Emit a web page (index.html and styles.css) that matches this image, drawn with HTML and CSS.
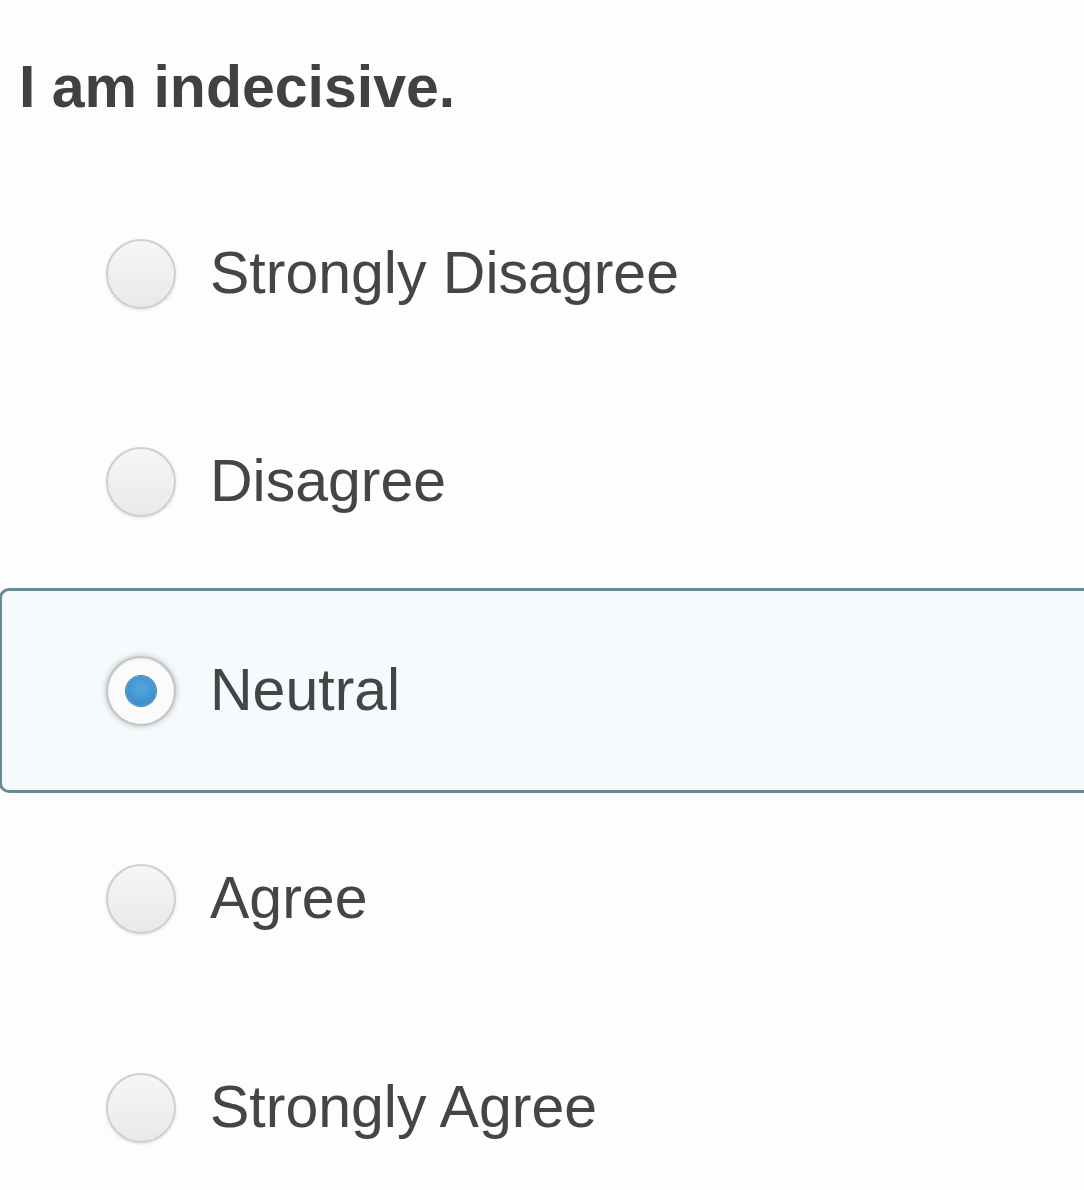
FILE: index.html
```html
<!DOCTYPE html>
<html lang="en">
<head>
<meta charset="utf-8">
<title>I am indecisive.</title>
<link rel="stylesheet" href="styles.css">
</head>
<body>
  <div class="question">
    <h1 class="question-title">I am indecisive.</h1>
    <div class="options">
      <label class="option">
        <input class="radio" type="radio" name="q1">
        <span class="option-label">Strongly Disagree</span>
      </label>
      <label class="option">
        <input class="radio" type="radio" name="q1">
        <span class="option-label">Disagree</span>
      </label>
      <label class="option option-selected">
        <input class="radio" type="radio" name="q1" checked>
        <span class="option-label">Neutral</span>
      </label>
      <label class="option">
        <input class="radio" type="radio" name="q1">
        <span class="option-label">Agree</span>
      </label>
      <label class="option">
        <input class="radio" type="radio" name="q1">
        <span class="option-label">Strongly Agree</span>
      </label>
    </div>
  </div>
</body>
</html>
```

FILE: styles.css
```css
html, body {
  margin: 0;
  padding: 0;
  overflow: hidden;
  background: #fdfdfd;
}

body {
  font-family: "Liberation Sans", Arial, Helvetica, sans-serif;
  color: #444444;
  width: 1084px;
  height: 1190px;
}

.question {
  padding-top: 54px;
}

.question-title {
  margin: 0 0 51px 0;
  padding-left: 19px;
  font-size: 59px;
  line-height: 66px;
  font-weight: bold;
  color: #414141;
}

.options {
  display: flex;
  flex-direction: column;
  gap: 3.5px;
}

.option {
  box-sizing: border-box;
  display: flex;
  align-items: center;
  gap: 34px;
  height: 205px;
  width: 1110px;
  margin-left: -1px;
  padding-left: 104px;
  border: 3px solid transparent;
  border-radius: 10px;
  cursor: pointer;
}

.option-selected {
  background: #f5fbfc;
  border-color: #6b8993;
}

.option-label {
  font-size: 59px;
  line-height: 1.15;
  color: #454545;
}

.radio {
  appearance: none;
  -webkit-appearance: none;
  box-sizing: border-box;
  margin: 0;
  width: 70px;
  height: 70px;
  flex: 0 0 70px;
  border-radius: 50%;
  border: 2px solid #cfcfcf;
  background: linear-gradient(#f6f6f6, #e9e9e9);
  box-shadow: 0 1px 3px rgba(0, 0, 0, 0.12);
  display: grid;
  place-items: center;
}

.radio:checked {
  background: #fbfbfb;
  border-color: #c4c4c4;
  box-shadow: 0 0 6px rgba(0, 0, 0, 0.25), inset 0 1px 2px rgba(0, 0, 0, 0.08);
}

.radio:checked::after {
  content: "";
  width: 30px;
  height: 30px;
  border-radius: 50%;
  background: radial-gradient(circle at 50% 40%, #53a6de, #3486c6);
  box-shadow: 0 0 0 1px #3f82b4;
}
```
